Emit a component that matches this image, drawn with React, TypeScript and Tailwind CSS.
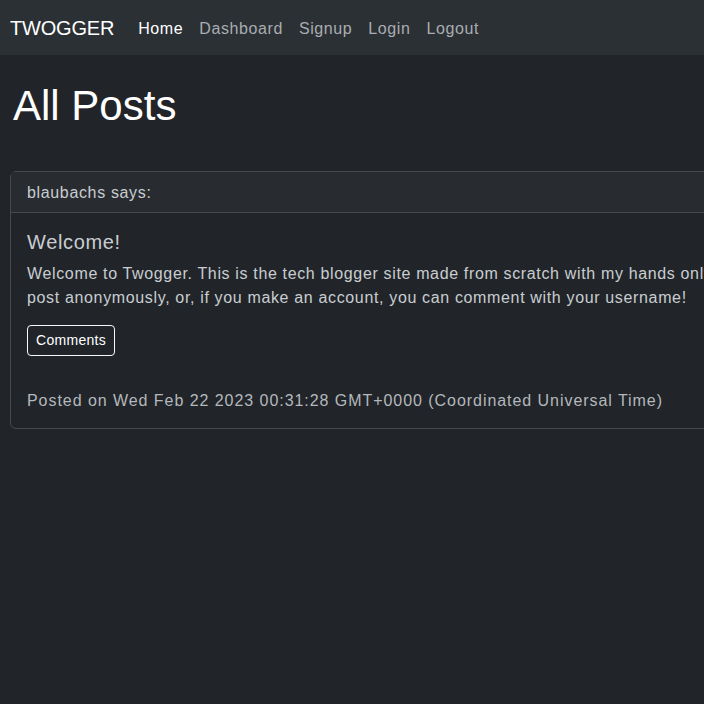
const links = [
  { name: "Home", active: true },
  { name: "Dashboard" },
  { name: "Signup" },
  { name: "Login" },
  { name: "Logout" },
];

function Navbar() {
  return (
    <nav className="h-[55px] bg-[#2b3035] flex items-center px-[10px]">
      <span className="text-[20px] text-white mr-[16px] leading-[30px] tracking-[-0.2px]">TWOGGER</span>
      <ul className="flex pt-[2px]">
        {links.map((l) => (
          <li key={l.name}>
            <a
              className={
                "block px-[8px] text-[16px] leading-[24px] tracking-[0.6px] " +
                (l.active ? "text-white" : "text-[#a9adb1]")
              }
            >
              {l.name}
            </a>
          </li>
        ))}
      </ul>
    </nav>
  );
}

function PostCard() {
  return (
    <div className="w-[1200px] border border-[#46494d] rounded-[6px] text-[#c9cdd1] tracking-[0.65px]">
      <div className="px-[16px] pt-[9px] pb-[7px] leading-[24px] text-[16px] bg-[#282c30] border-b border-[#46494d]">
        blaubachs says:
      </div>
      <div className="px-[16px] pt-[17px] pb-[15px]">
        <h5 className="text-[20px] leading-[24px] mb-[8px]">Welcome!</h5>
        <p className="text-[16px] leading-[24px] mb-[15px]">
          Welcome to Twogger. This is the tech blogger site made from scratch with my hands only. You can
          <br />
          post anonymously, or, if you make an account, you can comment with your username!
        </p>
        <button className="border border-[#f8f9fa] text-white text-[14px] leading-[21px] px-[8px] py-[4px] rounded-[4px] tracking-[0.3px]">
          Comments
        </button>
        <p className="mt-[33px] text-[16px] leading-[24px] text-[#b4b8bc] tracking-[0.95px]">
          Posted on Wed Feb 22 2023 00:31:28 GMT+0000 (Coordinated Universal Time)
        </p>
      </div>
    </div>
  );
}

export default function App() {
  return (
    <div
      className="min-h-screen w-full overflow-hidden bg-[#212529] text-[#dee2e6]"
      style={{ fontFamily: '"Liberation Sans", Arial, sans-serif' }}
    >
      <Navbar />
      <h1 className="mt-[26px] ml-[13px] text-[42px] leading-[50px] text-white">All Posts</h1>
      <div className="mt-[40px] ml-[10px]">
        <PostCard />
      </div>
    </div>
  );
}
